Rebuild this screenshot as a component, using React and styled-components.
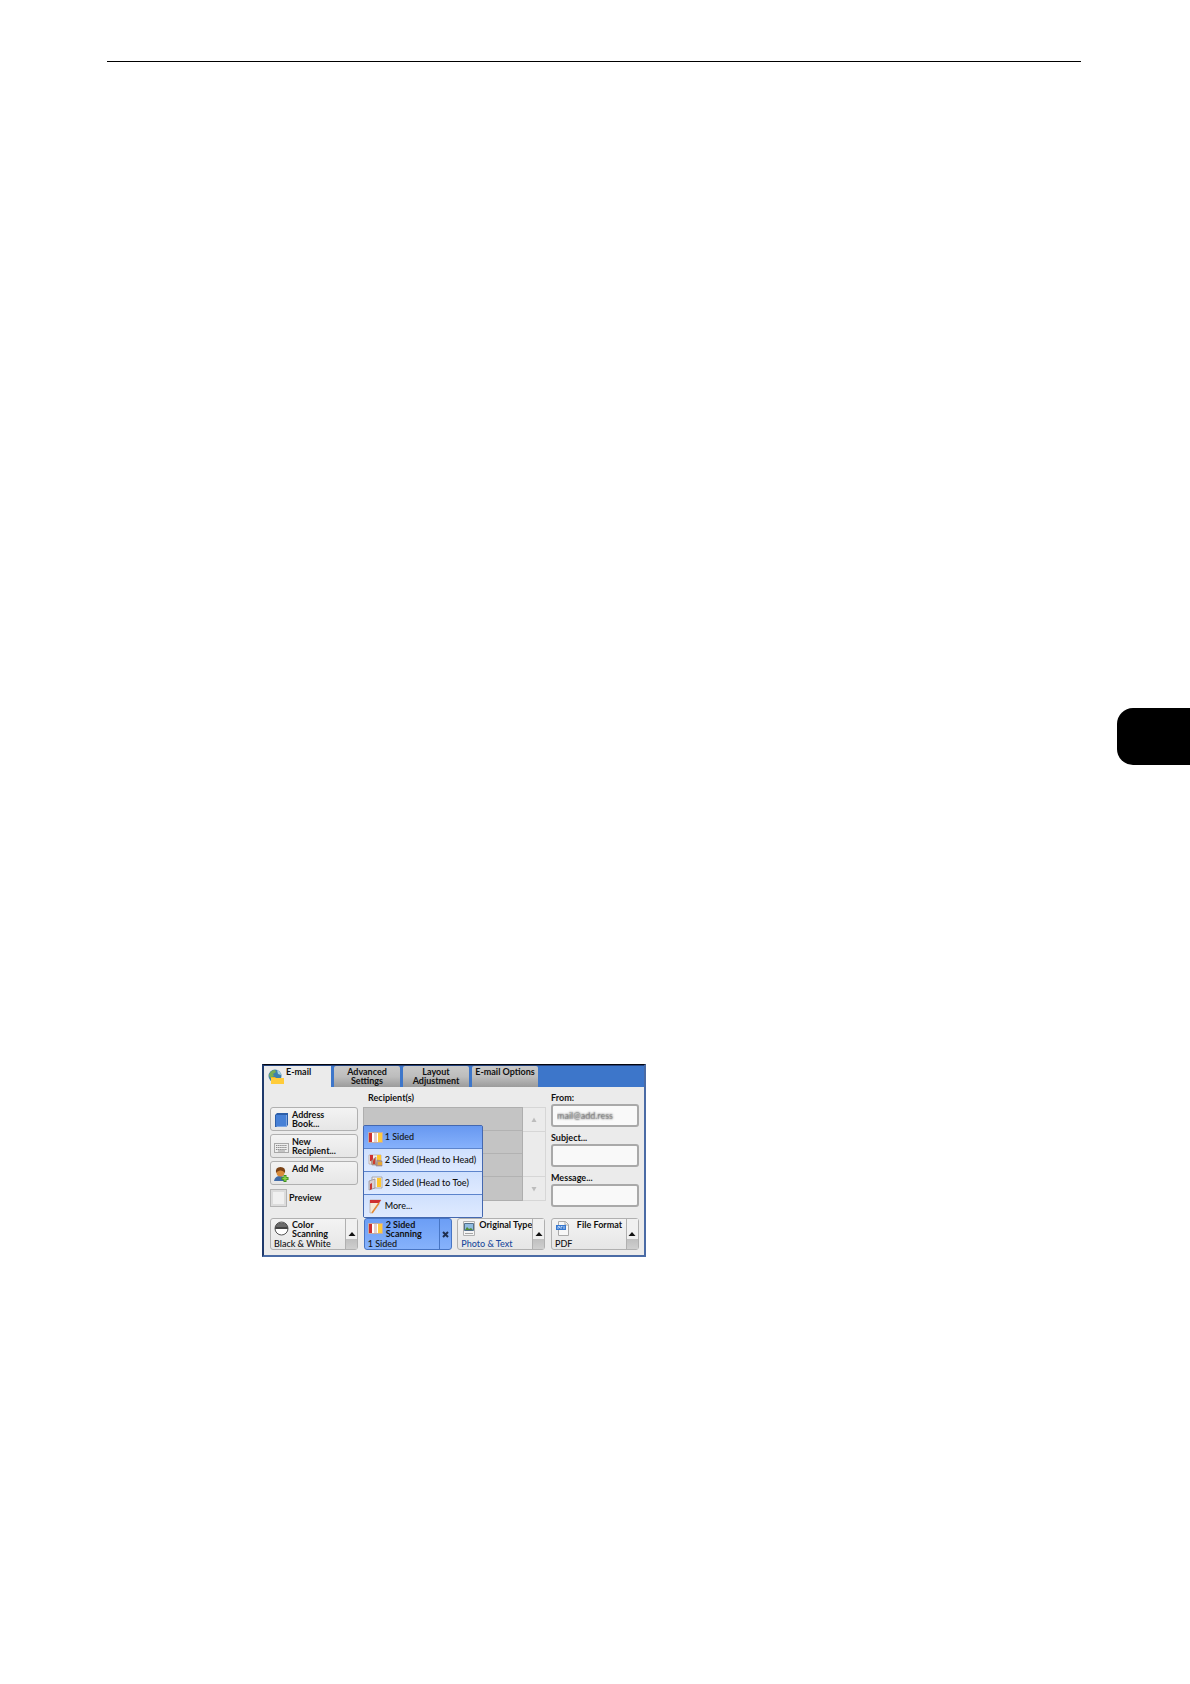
import React from "react";
import styled, { createGlobalStyle, css } from "styled-components";

const Global = createGlobalStyle`
  *, *::before, *::after { box-sizing: border-box; }
  body { margin: 0; background: #fff; }
  button, input { font: inherit; color: inherit; }
`;

const Page = styled.main`
  display: flex;
  flex-direction: column;
  min-height: 100vh;
  font-family: Lato, "Open Sans", sans-serif;
  font-size: 9px;
  line-height: 10px;
  color: #111;
`;
const Rule = styled.hr`
  align-self: stretch;
  height: 1px;
  margin: 61px 109px 0 107px;
  border: 0;
  background: #000;
`;
const ChapterMark = styled.div`
  align-self: flex-end;
  width: 73px;
  height: 57px;
  margin-top: 646px;
  border-radius: 16px 0 0 16px;
  background: #000;
`;
const Panel = styled.section`
  width: 100%;
  max-width: 384px;
  margin: 299px 0 0 262px;
  border: 2px solid #4a6ba5;
  border-top: 1px solid #05070f;
  border-left-color: #1f3a6c;
  background: #ebebeb;
`;
const Tabs = styled.nav`
  display: flex;
  gap: 3px;
  height: 22px;
  background: #3d76ca;
  border-top: 1px solid #24427c;
`;
const Tab = styled.button`
  display: flex;
  justify-content: center;
  gap: 2px;
  width: 66px;
  padding: 1px 0 0;
  border: 0;
  border-radius: 2px 2px 0 0;
  background: ${(p) => (p.$active ? "#ebebeb" : "linear-gradient(#c9c9c9, #bdbdbd 50%, #9b9b9b)")};
  font-weight: 700;
  line-height: 9px;
  ${(p) =>
    p.$active &&
    css`
      justify-content: flex-start;
      width: 67px;
      padding-left: 4px;
      border-radius: 0;
    `}
  svg { margin-top: 2px; }
`;
const Body = styled.div`
  padding: 0 5px 5px 6px;
`;
const Columns = styled.div`
  display: grid;
  grid-template-columns: 88px 1fr 88px;
  gap: 5px;
`;
const Actions = styled.div`
  display: flex;
  flex-direction: column;
  gap: 3px;
  padding-top: 20px;
`;
const raised = css`
  border: 1px solid #b0b0b0;
  border-radius: 3px;
  background: linear-gradient(#f3f3f3, #e6e6e6);
`;
const Action = styled.button`
  ${raised}
  display: flex;
  gap: 3px;
  height: 24px;
  padding: 2px 3px;
  font-weight: 700;
  line-height: 9px;
  text-align: left;
  svg { margin-top: 3px; }
`;
const Preview = styled.label`
  display: flex;
  align-items: center;
  gap: 2px;
  margin-top: 1px;
  font-weight: 700;
`;
const Check = styled.input`
  appearance: none;
  width: 17px;
  height: 18px;
  margin: 0;
  border: 1px solid #b4b4b4;
  background: #f0f0f0;
  box-shadow: inset 0 0 0 2px #dcdcdc;
  &:checked { background: #4b82d8; }
`;
const Caption = styled.h2`
  height: 20px;
  margin: 0;
  padding: 6px 0 0 5px;
  font-size: 9px;
  font-weight: 700;
`;
const ListBox = styled.div`
  display: flex;
  height: 94px;
`;
const List = styled.ul`
  flex: 1;
  display: grid;
  grid-template-rows: repeat(4, 1fr);
  margin: 0;
  padding: 0;
  border: 1px solid #aeaeae;
  background: #c4c4c4;
  list-style: none;
`;
const Slot = styled.li`
  border-bottom: 1px solid #b2b2b2;
  &:last-child { border-bottom: 0; }
`;
const Scroll = styled.div`
  display: flex;
  flex-direction: column;
  justify-content: space-between;
  width: 23px;
  border: 1px solid #d6d6d6;
  border-left: 0;
`;
const ScrollButton = styled.button`
  display: grid;
  place-items: center;
  height: 24px;
  padding: 0;
  border: solid #d6d6d6;
  border-width: ${(p) => (p.$down ? "1px 0 0" : "0 0 1px")};
  background: transparent;
  color: #bcbcbc;
`;
const Field = styled.label`
  display: block;
  padding-top: 5px;
  font-weight: 700;
  line-height: 12px;
`;
const Input = styled.input`
  display: block;
  width: 100%;
  height: 23px;
  padding: 0 4px;
  border: 2px solid #a9a9a9;
  border-radius: 3px;
  background: #f9f9f9;
  color: rgba(60, 60, 60, 0.25);
  text-shadow: 0 0 2px #333;
`;
const Settings = styled.div`
  display: flex;
  justify-content: space-between;
  margin-top: 11px;
`;
const SettingBox = styled.div`
  ${raised}
  position: relative;
  display: flex;
  width: 88px;
  height: 32px;
  ${(p) =>
    p.$open &&
    css`
      border-color: #4775c4;
      background: linear-gradient(#6c9ef5, #86b2fb);
    `}
`;
const SettingMain = styled.button`
  flex: 1;
  display: grid;
  grid-template-columns: 16px 1fr;
  grid-template-rows: 19px 10px;
  column-gap: 2px;
  min-width: 0;
  padding: 1px 0 0 3px;
  border: 0;
  background: transparent;
  text-align: left;
  white-space: nowrap;
  svg { margin-top: 1px; }
`;
const SettingName = styled.span`
  font-weight: 700;
  line-height: 9px;
  text-align: ${(p) => (p.$wide ? "center" : "left")};
`;
const SettingValue = styled.span`
  grid-column: 1 / -1;
  font-weight: 500;
  color: ${(p) => (p.$changed ? "#1c4a9c" : "#111")};
`;
const Expand = styled.button`
  display: grid;
  place-items: center;
  width: 12px;
  padding: 0;
  border: 0;
  border-left: 1px solid ${(p) => (p.$open ? "#4775c4" : "#b0b0b0")};
  background: ${(p) => (p.$open ? "transparent" : "linear-gradient(#f0f0f0 65%, #bfbfbf 66%, #cfcfcf)")};
`;
const Menu = styled.div`
  position: absolute;
  bottom: calc(100% + 1px);
  left: -2px;
  z-index: 1;
  display: flex;
  flex-direction: column;
  gap: 1px;
  width: 120px;
  border: 1px solid #4468b0;
  border-radius: 2px;
  background: #5c84cc;
`;
const MenuItem = styled.button`
  display: flex;
  align-items: center;
  gap: 2px;
  height: 22px;
  padding: 0 0 0 4px;
  border: 0;
  background: ${(p) => (p.$active ? "linear-gradient(#6798f0, #86b1fb)" : "linear-gradient(#cfe0fd, #dfeaff)")};
  font-weight: 500;
  white-space: nowrap;
`;

const Icon = ({ children, w = 15, h = 15 }) => (
  <svg width={w} height={h} viewBox={`0 0 ${w} ${h}`} aria-hidden="true">{children}</svg>
);
const GlobeFolder = () => (
  <Icon w={16} h={16}>
    <circle cx="7" cy="7" r="6.5" fill="#3d7fae" />
    <path d="M1 6Q3 1 7 1L8 3 5 5 6 7 2 9Z" fill="#78ad54" />
    <path d="M9 1Q13 3 13 6L10 5Z" fill="#a9d3df" />
    <path d="M3 8h4l1 1h7v6H3z" fill="#f0b41c" />
    <path d="M3 9h13v6H3z" fill="#ffcc3a" />
  </Icon>
);
const Book = () => (
  <Icon>
    <path d="M1 2l2-2h11v12l-2 2H1z" fill="#2c5ea9" />
    <path d="M2 2h10v11H2z" fill="#4680d6" />
    <path d="M2.500 13.500h10V2" fill="none" stroke="#7ea6e2" />
  </Icon>
);
const Keyboard = () => (
  <Icon>
    <rect x=".5" y="3.500" width="14" height="9" fill="#ededed" stroke="#a8a8a8" />
    <path d="M2 5.500h11M2 7.500h11M2 9.500h11" stroke="#888" strokeDasharray="1.400 .700" />
    <path d="M4 11h7" stroke="#999" />
  </Icon>
);
const Person = () => (
  <Icon>
    <path d="M0 14Q1 9 6 9t6 5z" fill="#3f6aa8" />
    <circle cx="6.500" cy="5.500" r="4" fill="#d88b3a" />
    <path d="M2 6Q1 0 6.500 0T11 6Q9 3 6 3.500T2 6z" fill="#7b4215" />
    <path d="M11 8v7M7.500 11.500h7" stroke="#3c8f1e" strokeWidth="3" />
    <path d="M11 9v5M8.500 11.500h5" stroke="#8ed44d" strokeWidth="1.400" />
  </Icon>
);
const HalfCircle = () => (
  <Icon>
    <circle cx="7.500" cy="7.500" r="6.500" fill="#fff" stroke="#555" />
    <path d="M1 8a6.500 6.500 0 0 1 13 0z" fill="#454545" />
    <path d="M2 6Q3 2 7.500 2T13 6z" fill="#6c6c6c" />
  </Icon>
);
const OneSided = () => (
  <Icon>
    <path d="M.5 2.500h14v10H.5z" fill="#fff" stroke="#c2aba6" />
    <path d="M1 3h3v9H1z" fill="#cf3030" />
    <path d="M6 3h3v9H6z" fill="#e4cfcc" />
    <path d="M10 3h4v9h-4z" fill="#ffcb3e" />
  </Icon>
);
const HeadToHead = () => (
  <Icon>
    <path d="M1 2h12v9H1z" fill="#f4eeee" stroke="#b9a6a0" strokeWidth=".8" />
    <path d="M2 2h3v6H2z" fill="#cf3030" />
    <path d="M9 2h4v6H9z" fill="#ffc72e" />
    <path d="M3 8l5-4v8H4zM9 7l5 1v5H8z" fill="#b99584" stroke="#98807c" strokeWidth=".6" />
    <path d="M5 8l2-3v6H5z" fill="#d13a2e" />
    <path d="M10 9h4v3h-4z" fill="#e7a736" />
  </Icon>
);
const HeadToToe = () => (
  <Icon>
    <path d="M4 1h10v11H4z" fill="#f0eded" stroke="#9c9a9c" strokeWidth=".8" />
    <path d="M9 2h4v9H9z" fill="#ffc72e" />
    <path d="M1 5l6-2v9l-6 2z" fill="#d9cfd2" stroke="#8f878d" strokeWidth=".7" />
    <path d="M2 8l2-1v6l-2 1z" fill="#c63a36" />
  </Icon>
);
const More = () => (
  <Icon>
    <path d="M2 1h11L4 14H2z" fill="#f5ead8" stroke="#b9a6a0" strokeWidth=".7" />
    <path d="M2 1h11l-2 3H2z" fill="#cf3030" />
    <path d="M11 4L4 14" stroke="#e58a35" strokeWidth="1.600" />
  </Icon>
);
const Photo = () => (
  <Icon>
    <path d="M2.500 .5h11v14h-11z" fill="#f4f4f4" stroke="#b0b0b0" />
    <path d="M3.500 2.500h9v7h-9z" fill="#8fbbe0" stroke="#55708a" />
    <path d="M4 9l2-3 2 2 2-1 2 2z" fill="#4f8a35" />
    <path d="M4 12.500h8" stroke="#a5a5a5" />
  </Icon>
);
const PdfFile = () => (
  <Icon>
    <path d="M3.500 .5h7l3 3v11h-10z" fill="#f7f7f7" stroke="#aaa" />
    <path d="M10 .5V4h3.500" fill="none" stroke="#aaa" />
    <path d="M1 4h10v5H1z" fill="#3577cf" />
    <path d="M3 8V5.500h1.500V7M6 5.500V8M6 5.500h1.500M9 5v3" fill="none" stroke="#dce9fb" strokeWidth=".8" />
  </Icon>
);
const Triangle = ({ down, big }) => (
  <Icon w={8} h={6}>
    <path d={down ? "M1.500 1h5L4 5.500z" : big ? "M.5 5h7L4 1z" : "M1.500 5h5L4 .5z"} fill="currentColor" />
  </Icon>
);
const Cross = () => (
  <Icon w={7} h={7}>
    <path d="M1 1l5 5M6 1L1 6" stroke="#1f2f50" strokeWidth="2" />
  </Icon>
);

const Setting = ({ icon, name, value, open, changed, wide, children }) => (
  <SettingBox $open={open}>
    <SettingMain>
      {icon}
      <SettingName $wide={wide}>{name}</SettingName>
      <SettingValue $changed={changed}>{value}</SettingValue>
    </SettingMain>
    <Expand $open={open} aria-label={open ? "Close" : "Open"}>
      {open ? <Cross /> : <Triangle big />}
    </Expand>
    {children}
  </SettingBox>
);

export default function App() {
  return (
    <Page>
      <Global />
      <Rule />
      <ChapterMark />
      <Panel>
        <Tabs>
          <Tab $active><GlobeFolder />E-mail</Tab>
          <Tab>Advanced<br />Settings</Tab>
          <Tab>Layout<br />Adjustment</Tab>
          <Tab>E-mail Options</Tab>
        </Tabs>
        <Body>
          <Columns>
            <Actions>
              <Action><Book /><span>Address<br />Book...</span></Action>
              <Action><Keyboard /><span>New<br />Recipient...</span></Action>
              <Action><Person /><span>Add Me</span></Action>
              <Preview><Check type="checkbox" />Preview</Preview>
            </Actions>
            <div>
              <Caption>Recipient(s)</Caption>
              <ListBox>
                <List><Slot /><Slot /><Slot /><Slot /></List>
                <Scroll>
                  <ScrollButton aria-label="Scroll up"><Triangle /></ScrollButton>
                  <ScrollButton $down aria-label="Scroll down"><Triangle down /></ScrollButton>
                </Scroll>
              </ListBox>
            </div>
            <div>
              <Field htmlFor="from">From:</Field>
              <Input id="from" defaultValue="mail@add.ress" />
              <Field htmlFor="subject">Subject...</Field>
              <Input id="subject" />
              <Field htmlFor="message">Message...</Field>
              <Input id="message" />
            </div>
          </Columns>
          <Settings>
            <Setting icon={<HalfCircle />} name={<>Color<br />Scanning</>} value="Black & White" />
            <Setting open icon={<OneSided />} name={<>2 Sided<br />Scanning</>} value="1 Sided">
              <Menu>
                <MenuItem $active><OneSided />1 Sided</MenuItem>
                <MenuItem><HeadToHead />2 Sided (Head to Head)</MenuItem>
                <MenuItem><HeadToToe />2 Sided (Head to Toe)</MenuItem>
                <MenuItem><More />More...</MenuItem>
              </Menu>
            </Setting>
            <Setting wide changed icon={<Photo />} name="Original Type" value="Photo & Text" />
            <Setting wide icon={<PdfFile />} name="File Format" value="PDF" />
          </Settings>
        </Body>
      </Panel>
    </Page>
  );
}
